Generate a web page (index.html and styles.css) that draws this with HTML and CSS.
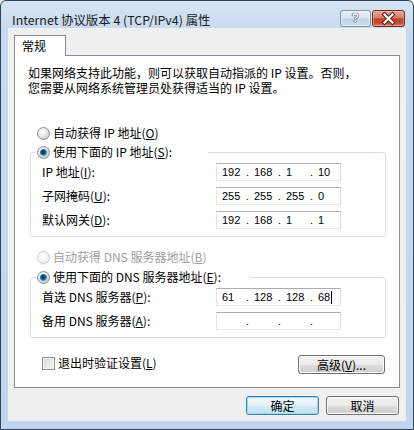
FILE: index.html
```
<!DOCTYPE html>
<html lang="zh-CN">
<head>
<meta charset="utf-8">
<title>Internet 协议版本 4 (TCP/IPv4) 属性</title>
<link rel="stylesheet" href="styles.css">
</head>
<body>
<div class="window">
  <div class="titlebar">
    <span class="title">Internet 协议版本 4 (TCP/IPv4) 属性</span>
    <div class="caption">
      <span class="cbtn help">?</span>
      <span class="cbtn close">
        <svg width="31" height="15" viewBox="0 0 31 15" aria-hidden="true">
          <path d="M11.5 3.5 L19.5 11.5 M19.5 3.5 L11.5 11.5" stroke="#5a2116" stroke-width="4.2" stroke-linecap="square" fill="none"/>
          <path d="M11.5 3.5 L19.5 11.5 M19.5 3.5 L11.5 11.5" stroke="#ffffff" stroke-width="2.2" stroke-linecap="square" fill="none"/>
        </svg>
      </span>
    </div>
  </div>
  <div class="client">
    <div class="tab">常规</div>
    <div class="panel">
      <div class="desc">
        <span class="desc-line">如果网络支持此功能，则可以获取自动指派的 IP 设置。否则，</span>
        <span class="desc-line">您需要从网络系统管理员处获得适当的 IP 设置。</span>
      </div>

      <div class="opt opt-first"><span class="radio"></span><span>自动获得 IP 地址(<u>O</u>)</span></div>
      <fieldset class="group">
        <legend class="legend legend-ip"><span class="radio on"></span><span>使用下面的 IP 地址(<u>S</u>):</span></legend>
        <div class="rows">
          <label>IP 地址(<u>I</u>):</label>
          <div class="ip"><span class="oct">192</span><span class="dot">.</span><span class="oct">168</span><span class="dot">.</span><span class="oct">1</span><span class="dot">.</span><span class="oct">10</span></div>
          <label>子网掩码(<u>U</u>):</label>
          <div class="ip"><span class="oct">255</span><span class="dot">.</span><span class="oct">255</span><span class="dot">.</span><span class="oct">255</span><span class="dot">.</span><span class="oct">0</span></div>
          <label>默认网关(<u>D</u>):</label>
          <div class="ip"><span class="oct">192</span><span class="dot">.</span><span class="oct">168</span><span class="dot">.</span><span class="oct">1</span><span class="dot">.</span><span class="oct">1</span></div>
        </div>
      </fieldset>

      <div class="opt opt-dns disabled"><span class="radio off"></span><span>自动获得 DNS 服务器地址(<u>B</u>)</span></div>
      <fieldset class="group group-dns">
        <legend class="legend legend-dns"><span class="radio on"></span><span>使用下面的 DNS 服务器地址(<u>E</u>):</span></legend>
        <div class="rows">
          <label>首选 DNS 服务器(<u>P</u>):</label>
          <div class="ip"><span class="oct">61</span><span class="dot">.</span><span class="oct">128</span><span class="dot">.</span><span class="oct">128</span><span class="dot">.</span><span class="oct">68<span class="caret"></span></span></div>
          <label>备用 DNS 服务器(<u>A</u>):</label>
          <div class="ip"><span class="oct"></span><span class="dot">.</span><span class="oct"></span><span class="dot">.</span><span class="oct"></span><span class="dot">.</span><span class="oct"></span></div>
        </div>
      </fieldset>

      <div class="foot">
        <label class="check"><span class="checkbox"></span><span>退出时验证设置(<u>L</u>)</span></label>
        <span class="btn adv">高级(<u>V</u>)...</span>
      </div>
    </div>
    <div class="actions">
      <span class="btn default">确定</span>
      <span class="btn">取消</span>
    </div>
  </div>
</div>
</body>
</html>
```
FILE: styles.css
```
* { box-sizing: border-box; }
html, body { margin: 0; padding: 0; }
body {
  width: 414px;
  height: 430px;
  overflow: hidden;
  background: #ffffff;
  font-family: "Noto Sans CJK SC", "Noto Sans", sans-serif;
  font-size: 12px;
  color: #000;
}
u { text-decoration: underline; text-underline-offset: 1px; }

.window {
  width: 414px;
  height: 430px;
  border: 1px solid #2d4458;
  border-radius: 6px 6px 0 0;
  background: linear-gradient(180deg, #d6e5f5 0, #c6daef 30px, #c1d6ec 100%);
  display: flex;
  flex-direction: column;
}

.titlebar {
  height: 27px;
  flex: none;
  display: flex;
  align-items: flex-start;
  padding: 0 8px 0 11px;
}
.title {
  margin-top: 11px;
  line-height: 16px;
  font-size: 12.4px;
  color: #1a1a1a;
  white-space: nowrap;
}
.caption {
  margin-left: auto;
  margin-top: 9px;
  display: flex;
  gap: 1px;
}
.cbtn {
  height: 17px;
  border-radius: 3px;
  display: flex;
  align-items: center;
  justify-content: center;
}
.help {
  width: 31px;
  border: 1px solid #7d94ae;
  background: linear-gradient(180deg, #e9f1fa 0, #d6e4f2 48%, #bfd3e9 52%, #cadcef 100%);
  box-shadow: inset 0 0 0 1px rgba(255,255,255,0.55);
  color: #ffffff;
  font: bold 12px/15px "Liberation Sans", Arial, sans-serif;
  text-shadow: 0 0 1px #34465c, 0 0 1px #34465c, 0 0 1px #34465c;
}
.close {
  width: 33px;
  border: 1px solid #6e2b20;
  background: linear-gradient(180deg, #eaa999 0, #d77a66 45%, #c3432b 52%, #c54a31 80%, #dd8466 100%);
  box-shadow: inset 0 0 0 1px rgba(255,220,210,0.35);
}
.close svg { display: block; }

.client {
  margin: 0 7px;
  height: 393px;
  flex: none;
  background: #f0f0f0;
  padding: 7px 6px 0;
}

.tab {
  width: 52px;
  height: 21px;
  border: 1px solid #898c95;
  border-bottom: 0;
  background: #ffffff;
  margin-bottom: -1px;
  position: relative;
  z-index: 1;
  padding-left: 7px;
  line-height: 20px;
}
.panel {
  height: 333px;
  border: 1px solid #898c95;
  background: #ffffff;
}

.desc {
  margin: 9px 0 0 13px;
  display: flex;
  flex-direction: column;
}
.desc-line {
  display: block;
  height: 15px;
  line-height: 15px;
  white-space: nowrap;
}

.opt {
  display: flex;
  align-items: center;
  gap: 3px;
  height: 16px;
  line-height: 16px;
  margin-left: 22px;
  white-space: nowrap;
}
.opt-first { margin-top: 30px; }
.opt-dns { margin-top: 12px; }
.disabled { color: #a0a0a0; }

.radio {
  width: 13px;
  height: 13px;
  flex: none;
  border-radius: 50%;
  border: 1px solid #8c8e90;
  background: radial-gradient(circle at 40% 35%, #ffffff 0, #eeeeee 35%, #cdcdcd 75%, #e4e4e4 100%);
  display: flex;
  align-items: center;
  justify-content: center;
}
.radio.on::after {
  content: "";
  width: 7px;
  height: 7px;
  border-radius: 50%;
  background: radial-gradient(circle at 45% 45%, #0b2a45 0, #1a5887 40%, #49b4e8 72%, #b5e6fb 100%);
}
.radio.off {
  border-color: #c6c8ca;
  background: radial-gradient(circle at 40% 35%, #ffffff 0, #f5f5f5 50%, #e6e6e6 100%);
}

.group {
  margin: 3px 13px 0 15px;
  border: 1px solid #d5dfe5;
  border-radius: 3px;
  padding: 3px 11px 7px;
  min-width: 0;
}
.group-dns { margin-top: 4px; }
.legend {
  display: flex;
  align-items: center;
  gap: 3px;
  height: 16px;
  line-height: 16px;
  margin-left: -6px;
  padding: 0 0 0 1px;
  white-space: nowrap;
}
.legend-ip { width: 172px; }
.legend-dns { width: 214px; }

.rows {
  display: grid;
  grid-template-columns: 174px 125px;
  row-gap: 6px;
  align-items: center;
}
.rows label { line-height: 16px; white-space: nowrap; }

.ip {
  height: 18px;
  display: flex;
  align-items: center;
  border: 1px solid;
  border-color: #abadb3 #dbdfe6 #e3e9ef #e2e3ea;
  background: #ffffff;
  padding-left: 2px;
  font: 11px/14px "Liberation Sans", Arial, sans-serif;
  color: #000;
}
.oct {
  width: 25px;
  padding-left: 3px;
  display: flex;
  align-items: center;
  white-space: nowrap;
}
.dot { width: 7px; text-align: center; }
.caret {
  width: 1px;
  height: 13px;
  background: #000;
  margin-left: 1px;
}

.foot {
  display: flex;
  align-items: flex-start;
  margin: 17px 14px 0 27px;
}
.check {
  display: flex;
  align-items: center;
  gap: 3px;
  height: 16px;
  line-height: 16px;
  white-space: nowrap;
}
.checkbox {
  width: 13px;
  height: 13px;
  flex: none;
  border: 1px solid #8e8f8f;
  background: linear-gradient(135deg, #cfd1d3 0, #e6e7e8 50%, #f6f6f6 100%);
  box-shadow: inset 0 0 0 1px #f4f4f4;
}

.btn {
  width: 73px;
  height: 19px;
  border: 1px solid #707070;
  border-radius: 3px;
  background: linear-gradient(180deg, #f2f2f2 0, #ebebeb 50%, #dddddd 50%, #cfcfcf 100%);
  box-shadow: inset 0 0 0 1px #fbfbfb;
  display: flex;
  align-items: center;
  justify-content: center;
  line-height: 16px;
  white-space: nowrap;
}
.adv { width: 87px; margin-left: auto; }
.btn.default {
  border-color: #3c7fb1;
  background: linear-gradient(180deg, #f1f8fd 0, #e3f1fa 50%, #d2e9f7 50%, #c4e2f4 100%);
  box-shadow: inset 0 0 0 1px #9fdcf6;
}

.actions {
  display: flex;
  justify-content: flex-end;
  gap: 7px;
  margin-top: 8px;
  padding-right: 1px;
}
```
